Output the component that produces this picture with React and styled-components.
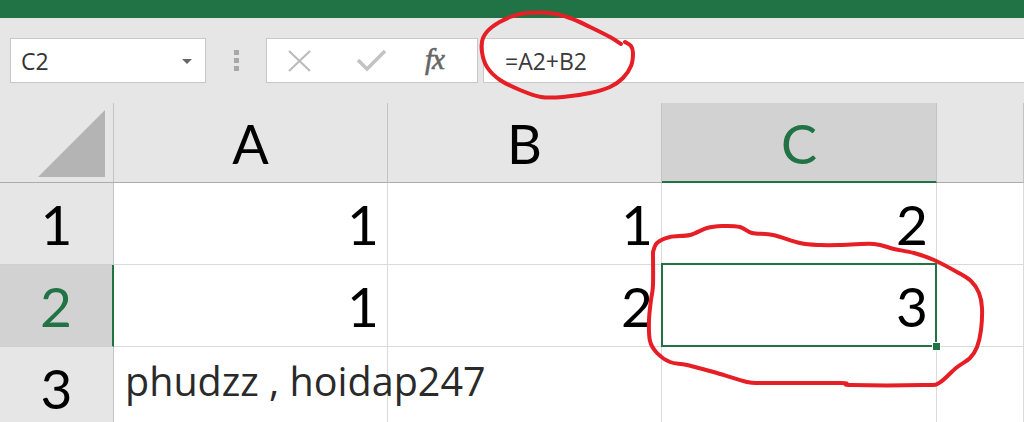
import React from 'react';
import styled, { createGlobalStyle } from 'styled-components';

const GREEN = '#217346';

const GlobalStyle = createGlobalStyle`
  html, body {
    margin: 0;
    padding: 0;
  }
  body {
    background: #e6e6e6;
    overflow: hidden;
    font-family: 'Open Sans', 'Noto Sans', sans-serif;
  }
`;

// catmull-rom -> cubic bezier, so the hand drawn marks look smooth
const smoothPath = (pts) => {
  let d = `M ${pts[0][0]} ${pts[0][1]}`;
  for (let i = 0; i < pts.length - 1; i++) {
    const p0 = pts[i - 1] || pts[i];
    const p1 = pts[i];
    const p2 = pts[i + 1];
    const p3 = pts[i + 2] || p2;
    const c1x = p1[0] + (p2[0] - p0[0]) / 6;
    const c1y = p1[1] + (p2[1] - p0[1]) / 6;
    const c2x = p2[0] - (p3[0] - p1[0]) / 6;
    const c2y = p2[1] - (p3[1] - p1[1]) / 6;
    d += ` C ${c1x.toFixed(1)} ${c1y.toFixed(1)}, ${c2x.toFixed(1)} ${c2y.toFixed(1)}, ${p2[0]} ${p2[1]}`;
  }
  return d;
};

const formulaLoop = [
  [621, 44], [610, 37], [590, 27], [570, 18], [550, 13], [527, 13], [510, 17],
  [492, 27], [483, 38], [482, 52], [487, 67], [500, 80], [520, 90], [541, 97],
  [563, 97], [590, 93], [610, 87], [623, 78], [631, 66], [633, 53], [631, 46],
  [625, 42],
];

const cellLoop = [
  [653, 252], [657, 243], [670, 237], [690, 235], [707, 228], [722, 226],
  [740, 227], [752, 233], [773, 235], [800, 243], [820, 245], [840, 245],
  [874, 244], [894, 249], [914, 253], [934, 260], [957, 272], [971, 281],
  [979, 293], [982, 308], [981, 330], [977, 347], [970, 358], [956, 368],
  [939, 383], [924, 385], [851, 385], [841, 383], [767, 383], [747, 382],
  [717, 373], [687, 365], [670, 362], [657, 353], [650, 341], [649, 320],
  [651, 300], [653, 285], [653, 252],
];

const columns = ['A', 'B', 'C'];
const rows = [
  { n: 1, values: ['1', '1', '2'] },
  { n: 2, values: ['1', '2', '3'] },
  { n: 3, values: ['', '', ''], note: 'phudzz , hoidap247' },
];

const App = () => {
  return (
    <Window>
      <GlobalStyle />
      <TitleStrip />

      <FormulaBar>
        <NameBox>
          <span>C2</span>
          <DropArrow />
        </NameBox>
        <Grip>
          <i />
          <i />
          <i />
        </Grip>
        <FnBox>
          <svg width="26" height="24" viewBox="0 0 26 24">
            <path d="M2 2 L23 22 M23 2 L2 22" stroke="#bcbcbc" strokeWidth="2.2" fill="none" />
          </svg>
          <CheckWrap>
            <svg width="30" height="24" viewBox="0 0 30 24">
              <path d="M1 11 L10 20 L28 2" stroke="#c2c2c2" strokeWidth="3.4" fill="none" />
            </svg>
          </CheckWrap>
          <Fx>fx</Fx>
        </FnBox>
        <FormulaInput>=A2+B2</FormulaInput>
      </FormulaBar>

      <Sheet>
        <Corner>
          <svg width="70" height="70" viewBox="0 0 70 70">
            <polygon points="67,0 67,67 0,67" fill="#b4b4b4" />
          </svg>
        </Corner>
        {columns.map((c) => (
          <ColHead key={c} $active={c === 'C'}>
            {c}
          </ColHead>
        ))}
        <ColHead />

        {rows.map((r) => (
          <React.Fragment key={r.n}>
            <RowHead $active={r.n === 2}>{r.n}</RowHead>
            {r.values.map((v, i) => (
              <Cell key={i} $selected={r.n === 2 && i === 2}>
                {r.note && i === 0 ? <Note>{r.note}</Note> : v}
              </Cell>
            ))}
            <Cell />
          </React.Fragment>
        ))}
      </Sheet>

      <Marks width="1024" height="422" viewBox="0 0 1024 422">
        <path d={smoothPath(formulaLoop)} />
        <path d={smoothPath(cellLoop)} />
      </Marks>
    </Window>
  );
};

// Styled-components
const Window = styled.div`
  position: relative;
  width: 1024px;
  height: 422px;
  overflow: hidden;
  background: #e6e6e6;
`;

const TitleStrip = styled.div`
  height: 18px;
  background: ${GREEN};
`;

const FormulaBar = styled.div`
  display: flex;
  align-items: center;
  height: 45px;
  margin: 20px 0;
  padding-left: 10px;
`;

const Box = styled.div`
  box-sizing: border-box;
  height: 45px;
  background: #fff;
  border: 1px solid #c8c8c8;
  display: flex;
  align-items: center;
`;

const NameBox = styled(Box)`
  width: 196px;
  justify-content: space-between;
  padding: 0 13px 0 10px;
  font-size: 23px;
  color: #333;
`;

const DropArrow = styled.span`
  width: 0;
  height: 0;
  border-left: 5px solid transparent;
  border-right: 5px solid transparent;
  border-top: 5px solid #666;
  margin-top: 1px;
`;

const Grip = styled.div`
  display: flex;
  flex-direction: column;
  gap: 3px;
  margin-left: 28px;

  i {
    display: block;
    width: 5px;
    height: 5px;
    background: #a8a8a8;
  }
`;

const FnBox = styled(Box)`
  width: 212px;
  margin-left: 27px;
  padding-left: 20px;
`;

const CheckWrap = styled.span`
  display: flex;
  margin-left: 44px;
`;

const Fx = styled.span`
  margin-left: 38px;
  font-family: 'Liberation Serif', 'DejaVu Serif', serif;
  font-style: italic;
  font-size: 29px;
  color: #666;
  -webkit-text-stroke: 0.6px #666;
  letter-spacing: -1px;
  line-height: 1;
  margin-top: -2px;
`;

const FormulaInput = styled(Box)`
  flex: 1;
  margin-left: 5px;
  border-right: none;
  padding-left: 21px;
  font-size: 23px;
  color: #3a3a3a;
`;

const Sheet = styled.div`
  display: grid;
  grid-template-columns: 114px 274px 274px 275px 1fr;
  grid-template-rows: 80px 82px 82px 82px;
  font-family: Lato, 'Open Sans', sans-serif;
  font-size: 55px;
  line-height: 1;
  color: #000;
`;

const Corner = styled.div`
  box-sizing: border-box;
  border-right: 1px solid #c4c4c4;
  border-bottom: 1px solid #ababab;
  display: flex;
  align-items: flex-start;
  justify-content: flex-end;
  padding: 7px 5px 0 0;
`;

const ColHead = styled.div`
  box-sizing: border-box;
  background: ${(p) => (p.$active ? '#d2d2d2' : '#e6e6e6')};
  color: ${(p) => (p.$active ? GREEN : '#000')};
  border-right: 1px solid #c4c4c4;
  border-bottom: ${(p) => (p.$active ? `2px solid ${GREEN}` : '1px solid #ababab')};
  display: flex;
  justify-content: center;
  padding-top: 14px;
  font-size: 54px;
`;

const RowHead = styled.div`
  box-sizing: border-box;
  background: ${(p) => (p.$active ? '#d2d2d2' : '#e6e6e6')};
  color: ${(p) => (p.$active ? GREEN : '#000')};
  border-right: ${(p) => (p.$active ? `2px solid ${GREEN}` : '1px solid #c4c4c4')};
  border-bottom: 1px solid #d0d0d0;
  display: flex;
  justify-content: center;
  padding-top: 14px;
`;

const Cell = styled.div`
  position: relative;
  box-sizing: border-box;
  background: #fff;
  border-right: 1px solid #dadada;
  border-bottom: 1px solid #dadada;
  display: flex;
  justify-content: flex-end;
  padding: 14px 8px 0 0;
  white-space: nowrap;

  ${(p) =>
    p.$selected &&
    `
    &::after {
      content: '';
      position: absolute;
      top: -2px;
      left: -1px;
      right: -1px;
      bottom: -1px;
      border: 2px solid ${GREEN};
      z-index: 2;
    }
    &::before {
      content: '';
      position: absolute;
      right: -5px;
      bottom: -5px;
      width: 7px;
      height: 7px;
      background: ${GREEN};
      border: 1px solid #fff;
      z-index: 3;
    }
  `}
`;

const Note = styled.span`
  position: absolute;
  left: 11px;
  top: 15px;
  font-family: 'Open Sans', 'Noto Sans', sans-serif;
  font-size: 39.5px;
  color: #2a2a2a;
  z-index: 1;
`;

const Marks = styled.svg`
  position: absolute;
  inset: 0;
  pointer-events: none;
  z-index: 10;

  path {
    fill: none;
    stroke: #e61e25;
    stroke-width: 4;
    stroke-linejoin: round;
    stroke-linecap: round;
  }
`;

export default App;
